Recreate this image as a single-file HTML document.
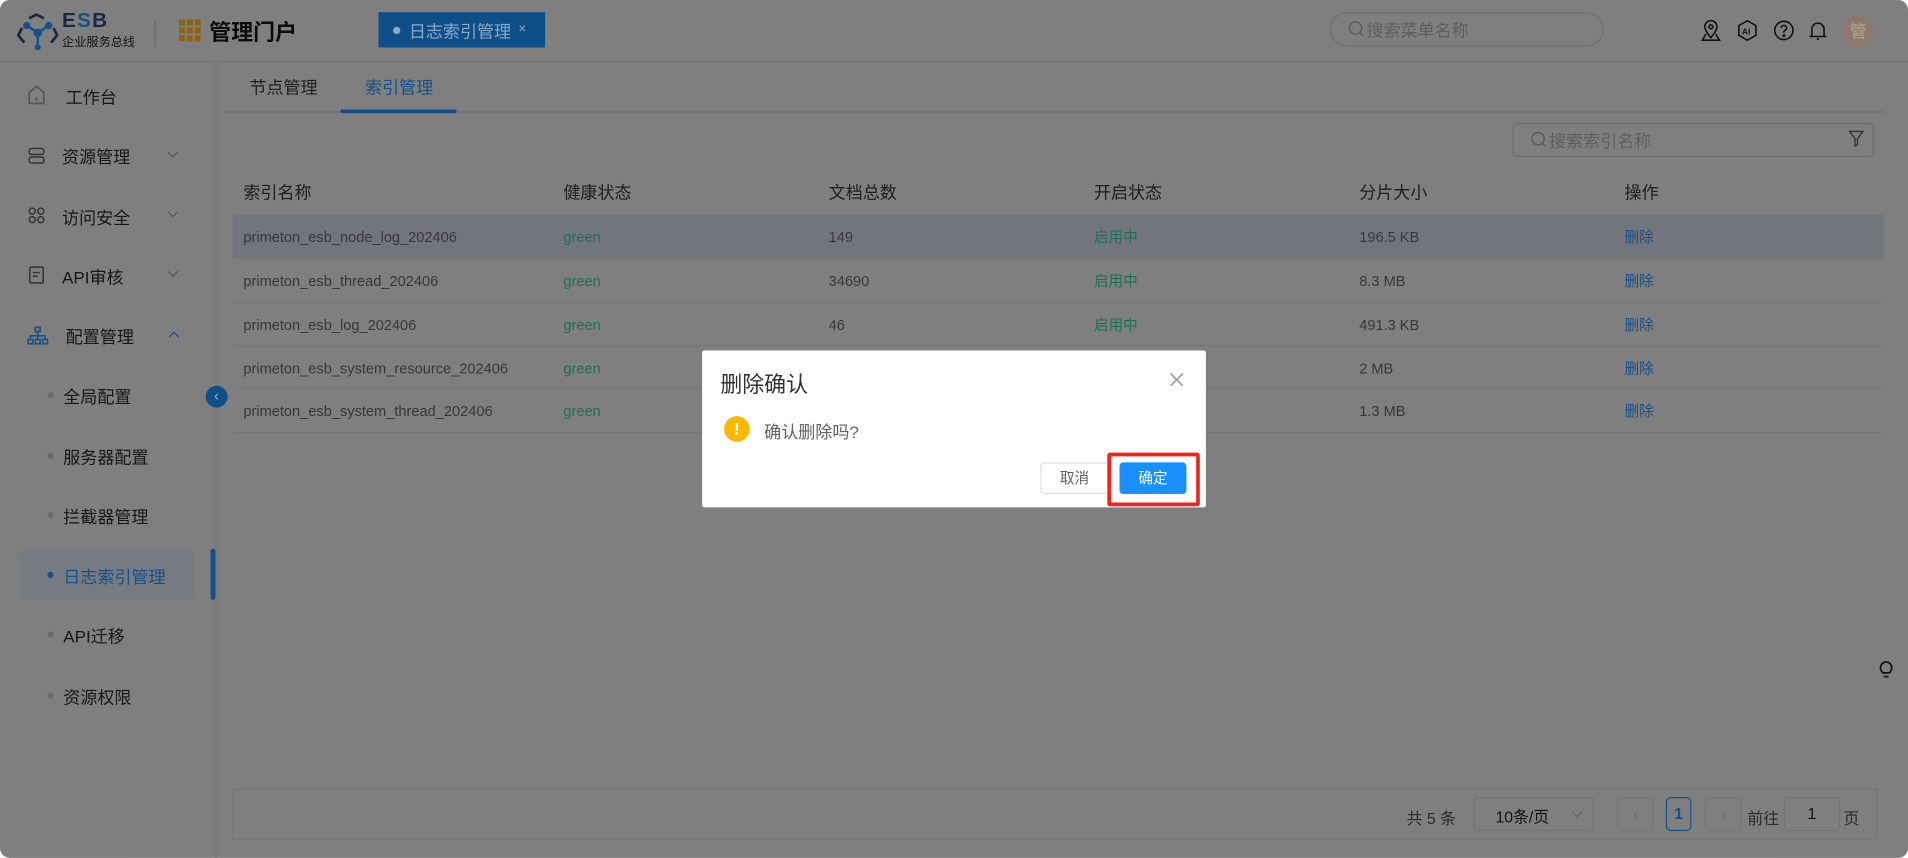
<!DOCTYPE html>
<html><head><meta charset="utf-8"><style>
*{margin:0;padding:0;box-sizing:border-box}
body{width:1908px;height:858px;overflow:hidden;background:#fff;font-family:"Liberation Sans","Noto Sans CJK SC",sans-serif}
#w{position:absolute;left:0;top:0;width:1568px;height:705px;transform:scale(1.21684);transform-origin:0 0;background:#7f7f7f;border-radius:8px;overflow:hidden;color:#1a1a1a}
.a{position:absolute}
.t{position:absolute;white-space:nowrap}
.side .t{font-size:14px;color:#161616}
.dot{position:absolute;width:5px;height:5px;border-radius:50%;background:#6a6a6a}
.row{position:absolute;left:191px;width:1357px;border-bottom:1px solid #777;height:36px}
.row span{position:absolute;top:0;line-height:36px;font-size:12px;color:#383838;white-space:nowrap}
.row .g{color:#1b7250}.row .b{color:#17508a}
.hd span{font-size:14px;color:#1e1e1e}
.ic{position:absolute;top:16px;width:18px;height:18px}
.chev{position:absolute;width:10px;height:6px}
</style></head><body><div id="w">
<div class="a" style="left:0;top:50px;width:1568px;height:1px;background:#737373"></div>
<svg class="a" style="left:14px;top:11px" width="34" height="30" viewBox="0 0 34 30"><g fill="none" stroke="#1c2840" stroke-width="2.2"><path d="M10 4 L16 1 L22 4"/><path d="M4 12 L1 18 L6 24"/><path d="M30 12 L33 18 L28 24"/></g><g fill="#15508c"><circle cx="8" cy="10" r="3"/><circle cx="26" cy="10" r="3"/><circle cx="17" cy="16" r="3.5"/><circle cx="17" cy="28" r="2.5"/></g><g stroke="#15508c" stroke-width="2"><line x1="8" y1="10" x2="17" y2="16"/><line x1="26" y1="10" x2="17" y2="16"/><line x1="17" y1="16" x2="17" y2="28"/></g></svg>
<div class="t" style="left:51px;top:7px;font-size:17px;font-weight:bold;color:#1c2840;letter-spacing:1px">E<span style="color:#15508c">S</span>B</div>
<div class="t" style="left:51px;top:26px;font-size:10px;color:#111">企业服务总线</div>
<div class="a" style="left:127px;top:16px;width:1px;height:22px;background:#6c6c6c"></div>
<svg class="a" style="left:147px;top:16px" width="18" height="18"><g fill="#8a640f"><rect x="0" y="0" width="5" height="5"/><rect x="6.5" y="0" width="5" height="5"/><rect x="13" y="0" width="5" height="5"/><rect x="0" y="6.5" width="5" height="5"/><rect x="6.5" y="6.5" width="5" height="5"/><rect x="13" y="6.5" width="5" height="5"/><rect x="0" y="13" width="5" height="5"/><rect x="6.5" y="13" width="5" height="5"/><rect x="13" y="13" width="5" height="5"/></g></svg>
<div class="t" style="left:172px;top:13px;font-size:18px;font-weight:bold;color:#0a0a0a">管理门户</div>
<div class="a" style="left:311px;top:10px;width:137px;height:29px;background:#0e4f8a"></div>
<div class="a" style="left:323px;top:22px;width:6px;height:6px;border-radius:50%;background:#8aa9c8"></div>
<div class="t" style="left:336px;top:16px;font-size:14px;color:#8aa9c8">日志索引管理</div>
<div class="t" style="left:426px;top:18px;font-size:11px;color:#8aa9c8">×</div>
<div class="a" style="left:1093px;top:10px;width:225px;height:28px;border:1px solid #6e6e6e;border-radius:14px"></div>
<svg class="a" style="left:1108px;top:17px" width="13" height="14"><circle cx="6" cy="6" r="5" fill="none" stroke="#5a5a5a" stroke-width="1.2"/><line x1="9.5" y1="9.5" x2="12" y2="12.5" stroke="#5a5a5a" stroke-width="1.2"/></svg>
<div class="t" style="left:1123px;top:15px;font-size:14px;color:#5e5e5e">搜索菜单名称</div>
<svg class="ic" style="left:1397px" viewBox="0 0 18 18" fill="none" stroke="#111" stroke-width="1.3"><path d="M9 15 C5 10 4 8 4 6 A5 5 0 0 1 14 6 C14 8 13 10 9 15Z"/><circle cx="9" cy="6" r="1.6"/><path d="M5 12 L2 17 H16 L13 12"/></svg>
<svg class="ic" style="left:1427px" viewBox="0 0 18 18" fill="none" stroke="#111" stroke-width="1.3"><path d="M9 1 L16 5 V13 L9 17 L2 13 V5Z"/><text x="4.5" y="12.5" font-size="7" font-weight="bold" fill="#111" stroke="none" font-family="Liberation Sans">AI</text></svg>
<svg class="ic" style="left:1457px" viewBox="0 0 18 18" fill="none" stroke="#111" stroke-width="1.3"><circle cx="9" cy="9" r="7.5"/><path d="M6.8 7 A2.2 2.2 0 1 1 9.5 9.2 C9 9.5 9 10 9 11"/><circle cx="9" cy="13.3" r=".6" fill="#111"/></svg>
<svg class="ic" style="left:1485px" viewBox="0 0 18 18" fill="none" stroke="#111" stroke-width="1.3"><path d="M4 14 V8 A5 5 0 0 1 14 8 V14 Z M2 14 H16"/><path d="M8 16 H10"/></svg>
<div class="a" style="left:1514px;top:13px;width:26px;height:26px;border-radius:50%;background:#8b7a6c;color:#a89888;font-size:14px;text-align:center;line-height:26px;font-weight:bold">管</div>
<div class="a" style="left:177px;top:51px;width:1px;height:654px;background:#777"></div>
<div class="side">
<svg class="a" style="left:22px;top:70px" width="16" height="16" fill="none" stroke="#555" stroke-width="1.3"><path d="M2 6 L8 1 L14 6 V15 H2Z"/><line x1="8" y1="10" x2="8" y2="13"/></svg>
<div class="t" style="left:54px;top:70px">工作台</div>
<svg class="a" style="left:22px;top:120px" width="16" height="16" fill="none" stroke="#333" stroke-width="1.2"><rect x="2" y="2" width="12" height="5" rx="2"/><rect x="2" y="9" width="12" height="5" rx="2"/></svg>
<div class="t" style="left:51px;top:119px">资源管理</div>
<svg class="chev" style="left:137px;top:124px" viewBox="0 0 10 6" fill="none" stroke="#555" stroke-width="1"><path d="M1 1 L5 5 L9 1"/></svg>
<svg class="a" style="left:22px;top:169px" width="16" height="16" fill="none" stroke="#333" stroke-width="1.2"><circle cx="4.5" cy="4.5" r="2.5"/><circle cx="11.5" cy="4.5" r="2.5"/><circle cx="4.5" cy="11.5" r="2.5"/><circle cx="11.5" cy="11.5" r="2.5"/></svg>
<div class="t" style="left:51px;top:169px">访问安全</div>
<svg class="chev" style="left:137px;top:173px" viewBox="0 0 10 6" fill="none" stroke="#555" stroke-width="1"><path d="M1 1 L5 5 L9 1"/></svg>
<svg class="a" style="left:22px;top:218px" width="16" height="16" fill="none" stroke="#333" stroke-width="1.2"><rect x="2.5" y="1.5" width="11" height="13" rx="1"/><line x1="5" y1="6" x2="11" y2="6"/><line x1="5" y1="9" x2="9" y2="9"/></svg>
<div class="t" style="left:51px;top:218px">API审核</div>
<svg class="chev" style="left:137px;top:222px" viewBox="0 0 10 6" fill="none" stroke="#555" stroke-width="1"><path d="M1 1 L5 5 L9 1"/></svg>
<svg class="a" style="left:22px;top:268px" width="18" height="16" fill="none" stroke="#15508c" stroke-width="1.3"><rect x="7" y="1" width="4" height="3.5"/><rect x="1" y="11" width="4" height="3.5"/><rect x="7" y="11" width="4" height="3.5"/><rect x="13" y="11" width="4" height="3.5"/><path d="M9 4.5 V11 M3 11 V8 H15 V11"/></svg>
<div class="t" style="left:54px;top:267px">配置管理</div>
<svg class="chev" style="left:138px;top:272px" viewBox="0 0 10 6" fill="none" stroke="#15508c" stroke-width="1"><path d="M1 5 L5 1 L9 5"/></svg>
<div class="dot" style="left:39px;top:322px"></div><div class="t" style="left:52px;top:316px">全局配置</div>
<div class="dot" style="left:39px;top:372px"></div><div class="t" style="left:52px;top:366px">服务器配置</div>
<div class="dot" style="left:39px;top:421px"></div><div class="t" style="left:52px;top:415px">拦截器管理</div>
<div class="a" style="left:16px;top:451px;width:144px;height:42px;border-radius:6px;background:#767b82"></div>
<div class="a" style="left:173px;top:451px;width:4px;height:42px;border-radius:2px;background:#0e4f8a"></div>
<div class="dot" style="left:39px;top:470px;background:#15508c"></div><div class="t" style="left:52px;top:464px;color:#15508c">日志索引管理</div>
<div class="dot" style="left:39px;top:519px"></div><div class="t" style="left:52px;top:513px">API迁移</div>
<div class="dot" style="left:39px;top:569px"></div><div class="t" style="left:52px;top:563px">资源权限</div>
</div>
<div class="a" style="left:169px;top:317px;width:18px;height:18px;border-radius:50%;background:#0e4f8a;color:#9cb5cf;font-size:12px;text-align:center;line-height:17px">‹</div>
<div class="t" style="left:205px;top:62px;font-size:14px;color:#1e1e1e">节点管理</div>
<div class="t" style="left:300px;top:62px;font-size:14px;color:#15508c">索引管理</div>
<div class="a" style="left:186px;top:91px;width:1362px;height:2px;background:#757575"></div>
<div class="a" style="left:280px;top:90px;width:95px;height:3px;background:#0e4f8a"></div>
<div class="a" style="left:1243px;top:101px;width:297px;height:28px;border:1px solid #6e6e6e;border-radius:3px"></div>
<svg class="a" style="left:1258px;top:108px" width="13" height="14"><circle cx="6" cy="6" r="5" fill="none" stroke="#5a5a5a" stroke-width="1.2"/><line x1="9.5" y1="9.5" x2="12" y2="12.5" stroke="#5a5a5a" stroke-width="1.2"/></svg>
<div class="t" style="left:1273px;top:106px;font-size:14px;color:#5e5e5e">搜索索引名称</div>
<svg class="a" style="left:1519px;top:107px" width="13" height="14" fill="none" stroke="#333" stroke-width="1.1"><path d="M1 1 H12 L7.5 7 V12 L5.5 13 V7 Z"/></svg>
<div class="row hd" style="top:140px;height:37px"><span style="left:9px">索引名称</span><span style="left:272px">健康状态</span><span style="left:490px">文档总数</span><span style="left:708px">开启状态</span><span style="left:926px">分片大小</span><span style="left:1144px">操作</span></div>
<div class="row" style="top:177px;background:#72767c"><span style="left:9px">primeton_esb_node_log_202406</span><span class="g" style="left:272px">green</span><span style="left:490px">149</span><span class="g" style="left:708px">启用中</span><span style="left:926px">196.5 KB</span><span class="b" style="left:1144px">删除</span></div>
<div class="row" style="top:213px"><span style="left:9px">primeton_esb_thread_202406</span><span class="g" style="left:272px">green</span><span style="left:490px">34690</span><span class="g" style="left:708px">启用中</span><span style="left:926px">8.3 MB</span><span class="b" style="left:1144px">删除</span></div>
<div class="row" style="top:249px"><span style="left:9px">primeton_esb_log_202406</span><span class="g" style="left:272px">green</span><span style="left:490px">46</span><span class="g" style="left:708px">启用中</span><span style="left:926px">491.3 KB</span><span class="b" style="left:1144px">删除</span></div>
<div class="row" style="top:285px;height:35px"><span style="left:9px">primeton_esb_system_resource_202406</span><span class="g" style="left:272px">green</span><span style="left:926px">2 MB</span><span class="b" style="left:1144px">删除</span></div>
<div class="row" style="top:320px;height:36px"><span style="left:9px">primeton_esb_system_thread_202406</span><span class="g" style="left:272px">green</span><span style="left:926px">1.3 MB</span><span class="b" style="left:1144px">删除</span></div>
<div class="a" style="left:191px;top:648px;width:1352px;height:42px;border:1px solid #767676"></div>
<div class="t" style="left:1156px;top:662px;font-size:13px;color:#2a2a2a">共 5 条</div>
<div class="a" style="left:1211px;top:655px;width:99px;height:28px;border:1px solid #727272;border-radius:3px"></div>
<div class="t" style="left:1229px;top:661px;font-size:13px;color:#111">10条/页</div>
<svg class="chev" style="left:1291px;top:666px" viewBox="0 0 10 6" fill="none" stroke="#666" stroke-width="1"><path d="M1 1 L5 5 L9 1"/></svg>
<div class="a" style="left:1329px;top:655px;width:30px;height:28px;border:1px solid #777;border-radius:3px;color:#6a6a6a;text-align:center;line-height:26px;font-size:14px">‹</div>
<div class="a" style="left:1369px;top:655px;width:21px;height:28px;border:1px solid #15508c;border-radius:4px;color:#15508c;text-align:center;line-height:26px;font-size:13px;font-weight:bold">1</div>
<div class="a" style="left:1401px;top:655px;width:30px;height:28px;border:1px solid #777;border-radius:3px;color:#6a6a6a;text-align:center;line-height:26px;font-size:14px">›</div>
<div class="t" style="left:1436px;top:662px;font-size:13px;color:#2a2a2a">前往</div>
<div class="a" style="left:1466px;top:655px;width:46px;height:28px;border:1px solid #747474;border-radius:3px;color:#111;text-align:center;line-height:26px;font-size:13px">1</div>
<div class="t" style="left:1515px;top:662px;font-size:13px;color:#2a2a2a">页</div>
<svg class="a" style="left:1544px;top:543px" width="12" height="16" fill="none" stroke="#111" stroke-width="1.4"><path d="M3.5 10 C1 8 1 5 2 3.5 A4.5 4.5 0 0 1 10 3.5 C11 5 11 8 8.5 10 Z"/><line x1="4" y1="13" x2="8" y2="13"/></svg>
<div class="a" style="left:577px;top:288px;width:414px;height:129px;background:#fff;border-radius:2px"></div>
<div class="t" style="left:592px;top:302px;font-size:18px;color:#303133">删除确认</div>
<svg class="a" style="left:961px;top:306px" width="12" height="12" stroke="#909399" stroke-width="1.2"><line x1="1" y1="1" x2="11" y2="11"/><line x1="11" y1="1" x2="1" y2="11"/></svg>
<div class="a" style="left:595px;top:342px;width:21px;height:21px;border-radius:50%;background:#ffb800;color:#fff;text-align:center;line-height:21px;font-size:14px;font-weight:bold">!</div>
<div class="t" style="left:628px;top:345px;font-size:14px;color:#606266">确认删除吗?</div>
<div class="a" style="left:855px;top:380px;width:56px;height:26px;border:1px solid #dcdfe6;border-radius:3px;color:#606266;font-size:12px;text-align:center;line-height:24px">取消</div>
<div class="a" style="left:920px;top:380px;width:55px;height:26px;background:#1890ff;border-radius:3px;color:#fff;font-size:12px;text-align:center;line-height:26px">确定</div>
<div class="a" style="left:910px;top:372px;width:76px;height:44px;border:3px solid #f5211b;border-radius:2px"></div>
</div></body></html>
